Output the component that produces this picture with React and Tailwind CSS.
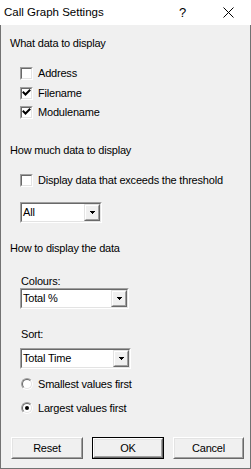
import React from "react";

const font = { fontFamily: '"Liberation Sans", Arial, sans-serif' };

function CheckBox({ checked }) {
  return (
    <div className="w-[13px] h-[13px] shrink-0 border border-t-[#a0a0a0] border-l-[#a0a0a0] border-r-white border-b-white">
      <div className="w-full h-full bg-white border border-t-[#696969] border-l-[#696969] border-r-[#e3e3e3] border-b-[#e3e3e3] flex items-center justify-center">
        {checked && (
          <svg width="9" height="9" viewBox="0 0 9 9">
            <polyline points="1.5,3.5 3.5,5.5 7.5,1.5" fill="none" stroke="#000" strokeWidth="2" strokeLinecap="square" />
          </svg>
        )}
      </div>
    </div>
  );
}

function Radio({ checked }) {
  return (
    <div className="w-[12px] h-[12px] shrink-0 rounded-full border border-t-[#a0a0a0] border-l-[#a0a0a0] border-r-white border-b-white">
      <div className="w-full h-full rounded-full bg-white border border-t-[#696969] border-l-[#696969] border-r-[#e3e3e3] border-b-[#e3e3e3] flex items-center justify-center">
        {checked && <div className="w-[4px] h-[4px] rounded-full bg-black" />}
      </div>
    </div>
  );
}

function Combo({ value, width }) {
  return (
    <div
      className="h-[21px] border border-t-[#a0a0a0] border-l-[#a0a0a0] border-r-white border-b-white"
      style={{ width }}
    >
      <div className="w-full h-full bg-white border border-t-[#696969] border-l-[#696969] border-r-[#e3e3e3] border-b-[#e3e3e3] flex items-stretch">
        <div className="flex-1 flex items-center pl-[1px] text-[11px] text-black leading-none">{value}</div>
        <div className="w-[16px] border border-t-[#e3e3e3] border-l-[#e3e3e3] border-r-[#696969] border-b-[#696969] bg-[#f0f0f0]">
          <div className="w-full h-full border border-t-white border-l-white border-r-[#a0a0a0] border-b-[#a0a0a0] flex items-center justify-center">
            <svg width="7" height="4" viewBox="0 0 7 4">
              <rect x="1" y="0" width="5" height="1" fill="#000" />
              <rect x="2" y="1" width="3" height="1" fill="#000" />
              <rect x="3" y="2" width="1" height="1" fill="#000" />
            </svg>
          </div>
        </div>
      </div>
    </div>
  );
}

function Button({ children, width, def }) {
  return (
    <div className={def ? "border border-black" : ""} style={{ width }}>
      <div className={`${def ? "h-[20px]" : "h-[22px]"} border border-t-white border-l-white border-r-[#696969] border-b-[#696969] bg-[#f0f0f0]`}>
        <div className="w-full h-full border border-t-[#e3e3e3] border-l-[#e3e3e3] border-r-[#a0a0a0] border-b-[#a0a0a0] flex items-center justify-center text-[11px] text-black leading-none">
          {children}
        </div>
      </div>
    </div>
  );
}

export default function App() {
  return (
    <div className="w-[251px] h-[469px] flex flex-col bg-white overflow-hidden" style={font}>
      <div className="h-[25px] flex items-center bg-white shrink-0">
        <div className="pl-[4px] text-[11.5px] text-black leading-none flex-1">Call Graph Settings</div>
        <div className="w-[45px] flex items-center justify-center text-[13px] text-black leading-none">?</div>
        <div className="w-[46px] flex items-center justify-center">
          <svg width="11" height="11" viewBox="0 0 11 11">
            <path d="M0.5 0.5 L10.5 10.5 M10.5 0.5 L0.5 10.5" stroke="#000" strokeWidth="1" fill="none" />
          </svg>
        </div>
      </div>
      <div className="flex-1 bg-[#f0f0f0] border-l border-r border-b border-[#727272] flex flex-col pl-[9px] text-[11px] tracking-[-0.2px] text-black leading-none">
        <div className="mt-[11px] h-[14px] flex items-center">What data to display</div>

        <div className="mt-[16px] h-[14px] flex items-center pl-[10px] gap-[5px]">
          <CheckBox />
          <span>Address</span>
        </div>
        <div className="mt-[6px] h-[14px] flex items-center pl-[10px] gap-[5px]">
          <CheckBox checked />
          <span>Filename</span>
        </div>
        <div className="mt-[5px] h-[14px] flex items-center pl-[10px] gap-[5px]">
          <CheckBox checked />
          <span>Modulename</span>
        </div>

        <div className="mt-[24px] h-[14px] flex items-center">How much data to display</div>
        <div className="mt-[16px] h-[14px] flex items-center pl-[10px] gap-[5px]">
          <CheckBox />
          <span>Display data that exceeds the threshold</span>
        </div>
        <div className="mt-[15px] pl-[10px]">
          <Combo value="All" width={82} />
        </div>

        <div className="mt-[18px] h-[14px] flex items-center">How to display the data</div>
        <div className="mt-[20px] h-[13px] flex items-center pl-[11px]">Colours:</div>
        <div className="pl-[10px]">
          <Combo value="Total %" width={109} />
        </div>
        <div className="mt-[19px] h-[13px] flex items-center pl-[11px]">Sort:</div>
        <div className="mt-[7px] pl-[10px]">
          <Combo value="Total Time" width={111} />
        </div>
        <div className="mt-[8px] h-[14px] flex items-center pl-[11px] gap-[5px]">
          <Radio />
          <span>Smallest values first</span>
        </div>
        <div className="mt-[10px] h-[14px] flex items-center pl-[11px] gap-[5px]">
          <Radio checked />
          <span>Largest values first</span>
        </div>

        <div className="mt-[22px] flex items-center pl-[1px] gap-[9px]">
          <Button width={72}>Reset</Button>
          <Button width={72} def>OK</Button>
          <Button width={71}>Cancel</Button>
        </div>
      </div>
    </div>
  );
}
